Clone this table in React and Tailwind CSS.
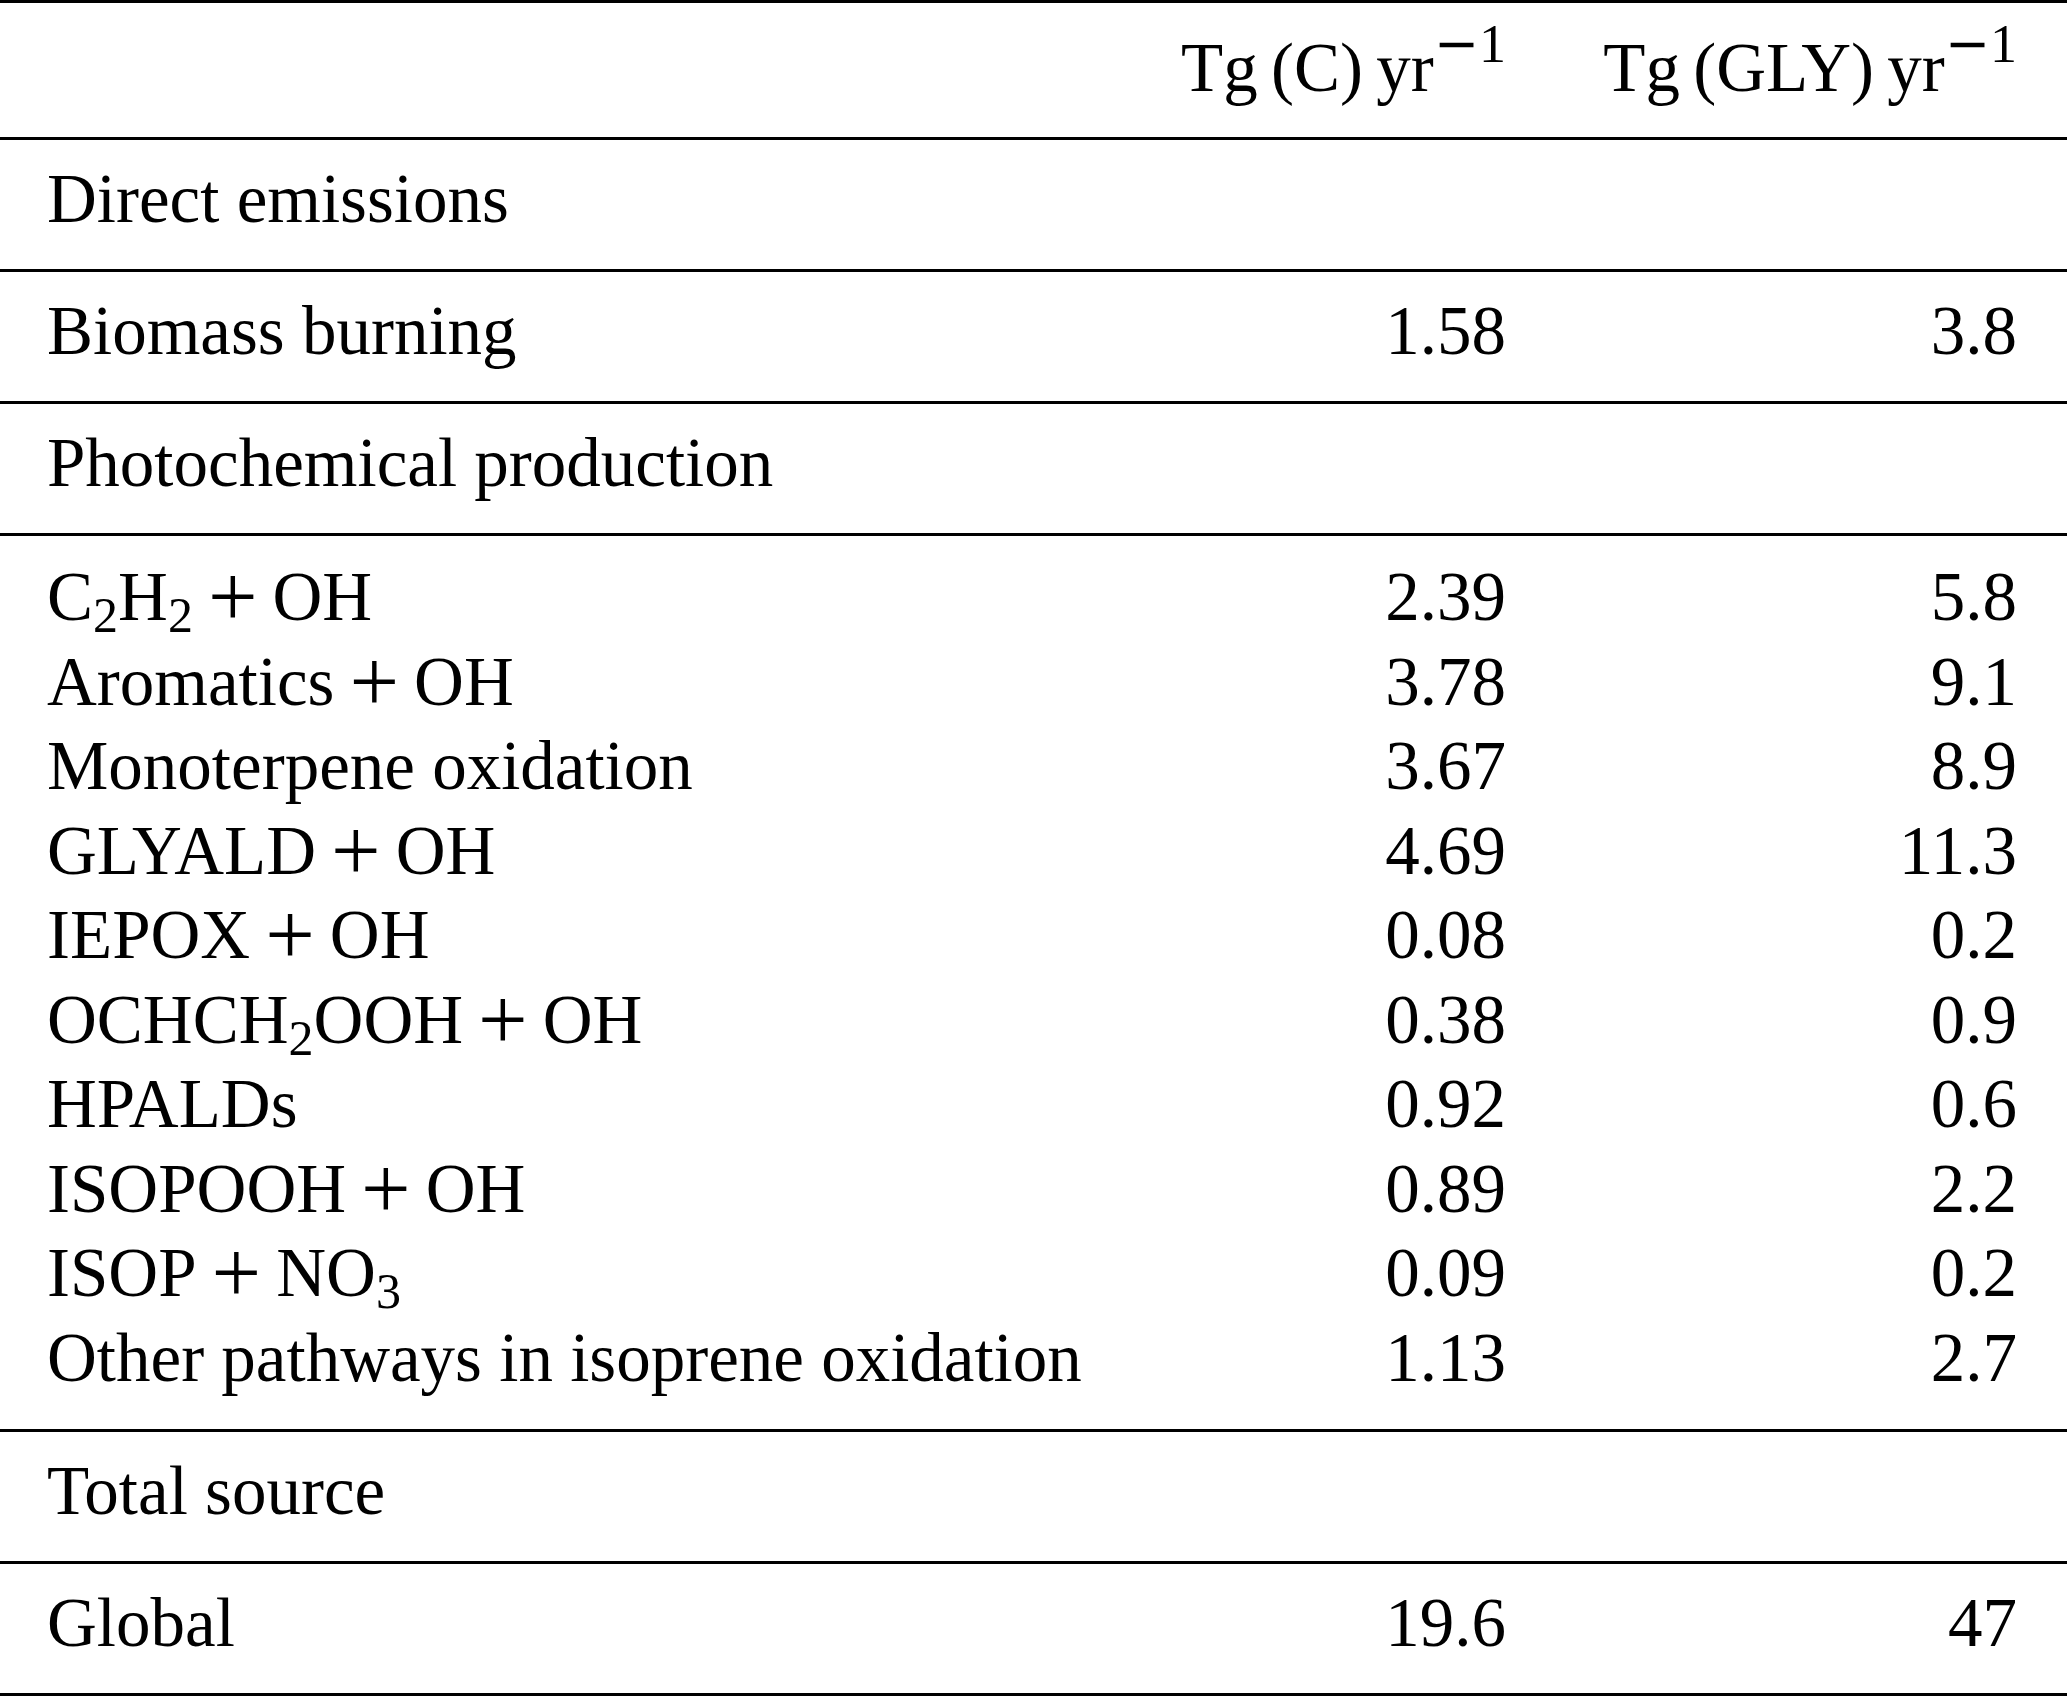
import React from 'react';

const Sub = ({ children }) => (
  <sub className="text-[50px] bottom-[-12px]">{children}</sub>
);

// math-style plus: wider glyph than the text one, kept out of the line box
const Plus = () => (
  <span className="relative top-[6px] mx-[15px] text-[88px] leading-[0]">+</span>
);

const Unit = ({ what }) => (
  <span className="[word-spacing:-4px]">
    Tg ({what}) yr
    <sup className="text-[54px] top-[-29px]">
      <span className="font-['DejaVu_Sans',sans-serif]">−</span>1
    </sup>
  </span>
);

const Row = ({ label, a, b, className = '' }) => (
  <div className={`grid grid-cols-[1133px_421px_513px] ${className}`}>
    <div className="pl-[47px] whitespace-nowrap">{label}</div>
    <div className="pr-[48px] text-right whitespace-nowrap">{a}</div>
    <div className="pr-[50px] text-right whitespace-nowrap">{b}</div>
  </div>
);

const Section = ({ children, className = '' }) => (
  <div className={`border-b-[3px] border-black ${className}`}>{children}</div>
);

const pathways = [
  [<>C<Sub>2</Sub>H<Sub>2</Sub><Plus />OH</>, '2.39', '5.8'],
  [<>Aromatics<Plus />OH</>, '3.78', '9.1'],
  ['Monoterpene oxidation', '3.67', '8.9'],
  [<>GLYALD<Plus />OH</>, '4.69', '11.3'],
  [<>IEPOX<Plus />OH</>, '0.08', '0.2'],
  [<>OCHCH<Sub>2</Sub>OOH<Plus />OH</>, '0.38', '0.9'],
  ['HPALDs', '0.92', '0.6'],
  [<>ISOPOOH<Plus />OH</>, '0.89', '2.2'],
  [<>ISOP<Plus />NO<Sub>3</Sub></>, '0.09', '0.2'],
  ['Other pathways in isoprene oxidation', '1.13', '2.7'],
];

export default function App() {
  return (
    <div className="w-[2067px] h-[1696px] bg-white text-black text-[69px] font-['Liberation_Serif','Times_New_Roman',serif] border-t-[3px] border-black">
      <Section className="pt-[23px] pb-[26px] leading-[85px]">
        <Row label="" a={<Unit what="C" />} b={<Unit what="GLY" />} />
      </Section>

      <Section className="pt-[17px] pb-[27px] leading-[85px]">
        <Row label="Direct emissions" />
      </Section>

      <Section className="pt-[17px] pb-[27px] leading-[85px]">
        <Row label="Biomass burning" a="1.58" b="3.8" />
      </Section>

      <Section className="pt-[17px] pb-[27px] leading-[85px]">
        <Row label="Photochemical production" />
      </Section>

      <Section className="pt-[19px] pb-[29px] leading-[84.5px]">
        {pathways.map(([label, a, b], i) => (
          <Row key={i} label={label} a={a} b={b} />
        ))}
      </Section>

      <Section className="pt-[17px] pb-[27px] leading-[85px]">
        <Row label="Total source" />
      </Section>

      <Section className="pt-[17px] pb-[27px] leading-[85px]">
        <Row label="Global" a="19.6" b="47" />
      </Section>
    </div>
  );
}
